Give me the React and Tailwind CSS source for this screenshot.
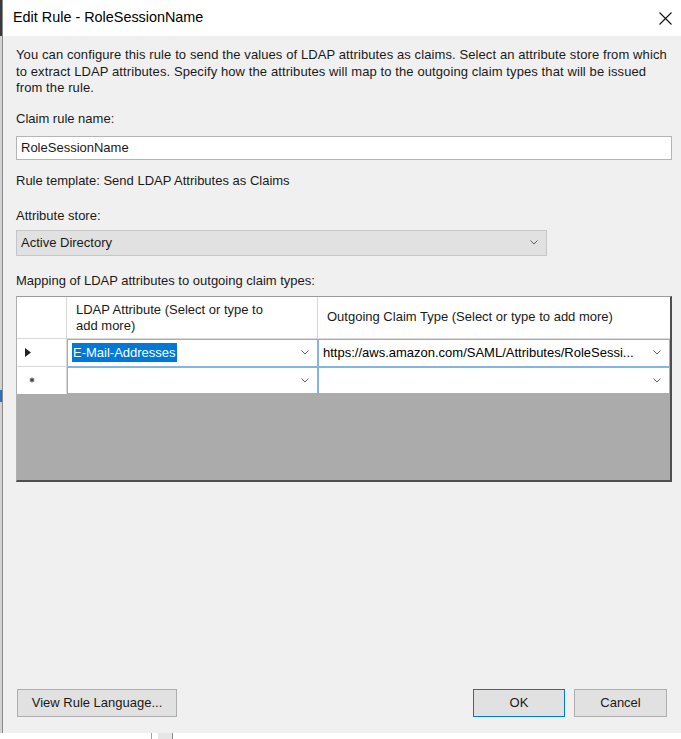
import React from "react";

function Chevron({ className = "" }) {
  return (
    <svg width="8" height="5" viewBox="0 0 8 5" className={className}>
      <path d="M0.5 0.5 L4 4 L7.5 0.5" fill="none" stroke="#606060" strokeWidth="1" />
    </svg>
  );
}

function Cell({ children, width, last }) {
  return (
    <div
      className={`h-full flex items-center justify-between bg-white border border-[#84b4e4] pl-[4px] pr-[8px] ${last ? "flex-1 min-w-0" : ""}`}
      style={width ? { width } : undefined}
    >
      <div className="flex-1 min-w-0 whitespace-nowrap overflow-hidden">{children}</div>
      <Chevron />
    </div>
  );
}

export default function App() {
  return (
    <div className="w-[681px] h-[739px] bg-white flex flex-col overflow-hidden text-[13px] text-[#1a1a1a] font-['Liberation_Sans',Arial,sans-serif]">
      <div className="flex h-[733px]">
        {/* left strip of desktop behind */}
        <div className="w-[2px] shrink-0 flex flex-col">
          <div className="h-[36px] bg-[#3a3a3a]" />
          <div className="h-[354px] bg-[#d2d2d2]" />
          <div className="h-[12px] bg-[#2a6fb8]" />
          <div className="flex-1 bg-[#d2d2d2]" />
        </div>
        {/* dialog */}
        <div className="flex-1 min-w-0 flex flex-col border-l border-[#8a8a8a]">
          {/* title bar */}
          <div className="h-[36px] bg-white flex items-center justify-between pl-[10px] pr-[9px] shrink-0">
            <span className="text-[14.4px] text-black">Edit Rule - RoleSessionName</span>
            <svg width="13" height="13" viewBox="0 0 13 13">
              <path d="M0.5 0.5 L12.5 12.5 M12.5 0.5 L0.5 12.5" stroke="#111" strokeWidth="1.1" />
            </svg>
          </div>
          {/* body */}
          <div className="flex-1 min-w-0 bg-[#f0f0f0] flex flex-col pl-[13px] pr-[9px] pt-[11px] pb-[16px]">
            <div className="leading-[16.5px] tracking-[0.1px] whitespace-nowrap overflow-hidden">
              <div>You can configure this rule to send the values of LDAP attributes as claims. Select an attribute store from which</div>
              <div>to extract LDAP attributes. Specify how the attributes will map to the outgoing claim types that will be issued</div>
              <div>from the rule.</div>
            </div>
            <div className="mt-[14px] leading-[16px]">Claim rule name:</div>
            <div className="mt-[9px] h-[24px] bg-white border border-[#b4b4b4] flex items-center pl-[4px]">
              RoleSessionName
            </div>
            <div className="mt-[13px] leading-[16px]">Rule template: Send LDAP Attributes as Claims</div>
            <div className="mt-[19px] leading-[16px]">Attribute store:</div>
            <div className="mt-[6px] w-[531px] h-[26px] bg-[#e1e1e1] border border-[#c6c6c6] flex items-center justify-between pl-[4px] pr-[8px]">
              <span>Active Directory</span>
              <Chevron />
            </div>
            <div className="mt-[17px] leading-[16px]">Mapping of LDAP attributes to outgoing claim types:</div>
            {/* grid */}
            <div className="mt-[7px] h-[186px] flex flex-col border-t border-l border-t-[#9a9a9a] border-l-[#b0b0b0] border-r-2 border-b-2 border-r-[#4e4e4e] border-b-[#4e4e4e] bg-[#ababab]">
              {/* header */}
              <div className="h-[42px] flex bg-white border-b border-[#d8d8d8]">
                <div className="w-[50px] border-r border-[#d8d8d8]" />
                <div className="w-[251px] border-r border-[#d8d8d8] pl-[9px] pt-[5px] leading-[16px]">
                  LDAP Attribute (Select or type to
                  <br />
                  add more)
                </div>
                <div className="flex-1 flex items-center pl-[9px]">
                  Outgoing Claim Type (Select or type to add more)
                </div>
              </div>
              {/* row 1 */}
              <div className="h-[28px] flex">
                <div className="w-[50px] bg-white border-r border-b border-[#d8d8d8] flex items-center pl-[8px]">
                  <svg width="6" height="9" viewBox="0 0 6 9">
                    <path d="M0 0 L6 4.5 L0 9 Z" fill="#222" />
                  </svg>
                </div>
                <Cell width="251px">
                  <span className="bg-[#0078d7] text-white px-[1px] py-[2px]">E-Mail-Addresses</span>
                </Cell>
                <Cell last>
                  <span className="text-black">https://aws.amazon.com/SAML/Attributes/RoleSessi...</span>
                </Cell>
              </div>
              {/* row 2 */}
              <div className="h-[27px] flex">
                <div className="w-[50px] bg-white border-r border-[#d8d8d8] flex items-center pl-[12px]">
                  <svg width="6" height="6" viewBox="0 0 6 6">
                    <path d="M3 0.5 V5.5 M0.8 1.7 L5.2 4.3 M5.2 1.7 L0.8 4.3" stroke="#444" strokeWidth="1.2" />
                  </svg>
                </div>
                <Cell width="251px">{""}</Cell>
                <Cell last>{""}</Cell>
              </div>
              <div className="flex-1" />
            </div>
            {/* buttons */}
            <div className="mt-auto flex items-center justify-between pl-[1px] pr-[5px]">
              <button className="h-[28px] w-[160px] bg-[#e1e1e1] border border-[#adadad] text-center">
                View Rule Language...
              </button>
              <div className="flex gap-[9px]">
                <button className="h-[28px] w-[92px] bg-[#e1e1e1] border border-[#0078d7] text-center">OK</button>
                <button className="h-[28px] w-[93px] bg-[#e1e1e1] border border-[#adadad] text-center">Cancel</button>
              </div>
            </div>
          </div>
        </div>
      </div>
      {/* desktop strip below dialog */}
      <div className="flex-1 flex bg-white">
        <div className="w-[151px]" />
        <div className="w-[1px] bg-[#a0a0a0]" />
        <div className="w-[6px]" />
        <div className="w-[14px] bg-[#e6e6e6]" />
        <div className="w-[1px] bg-[#8a8a8a]" />
        <div className="flex-1" />
      </div>
    </div>
  );
}
